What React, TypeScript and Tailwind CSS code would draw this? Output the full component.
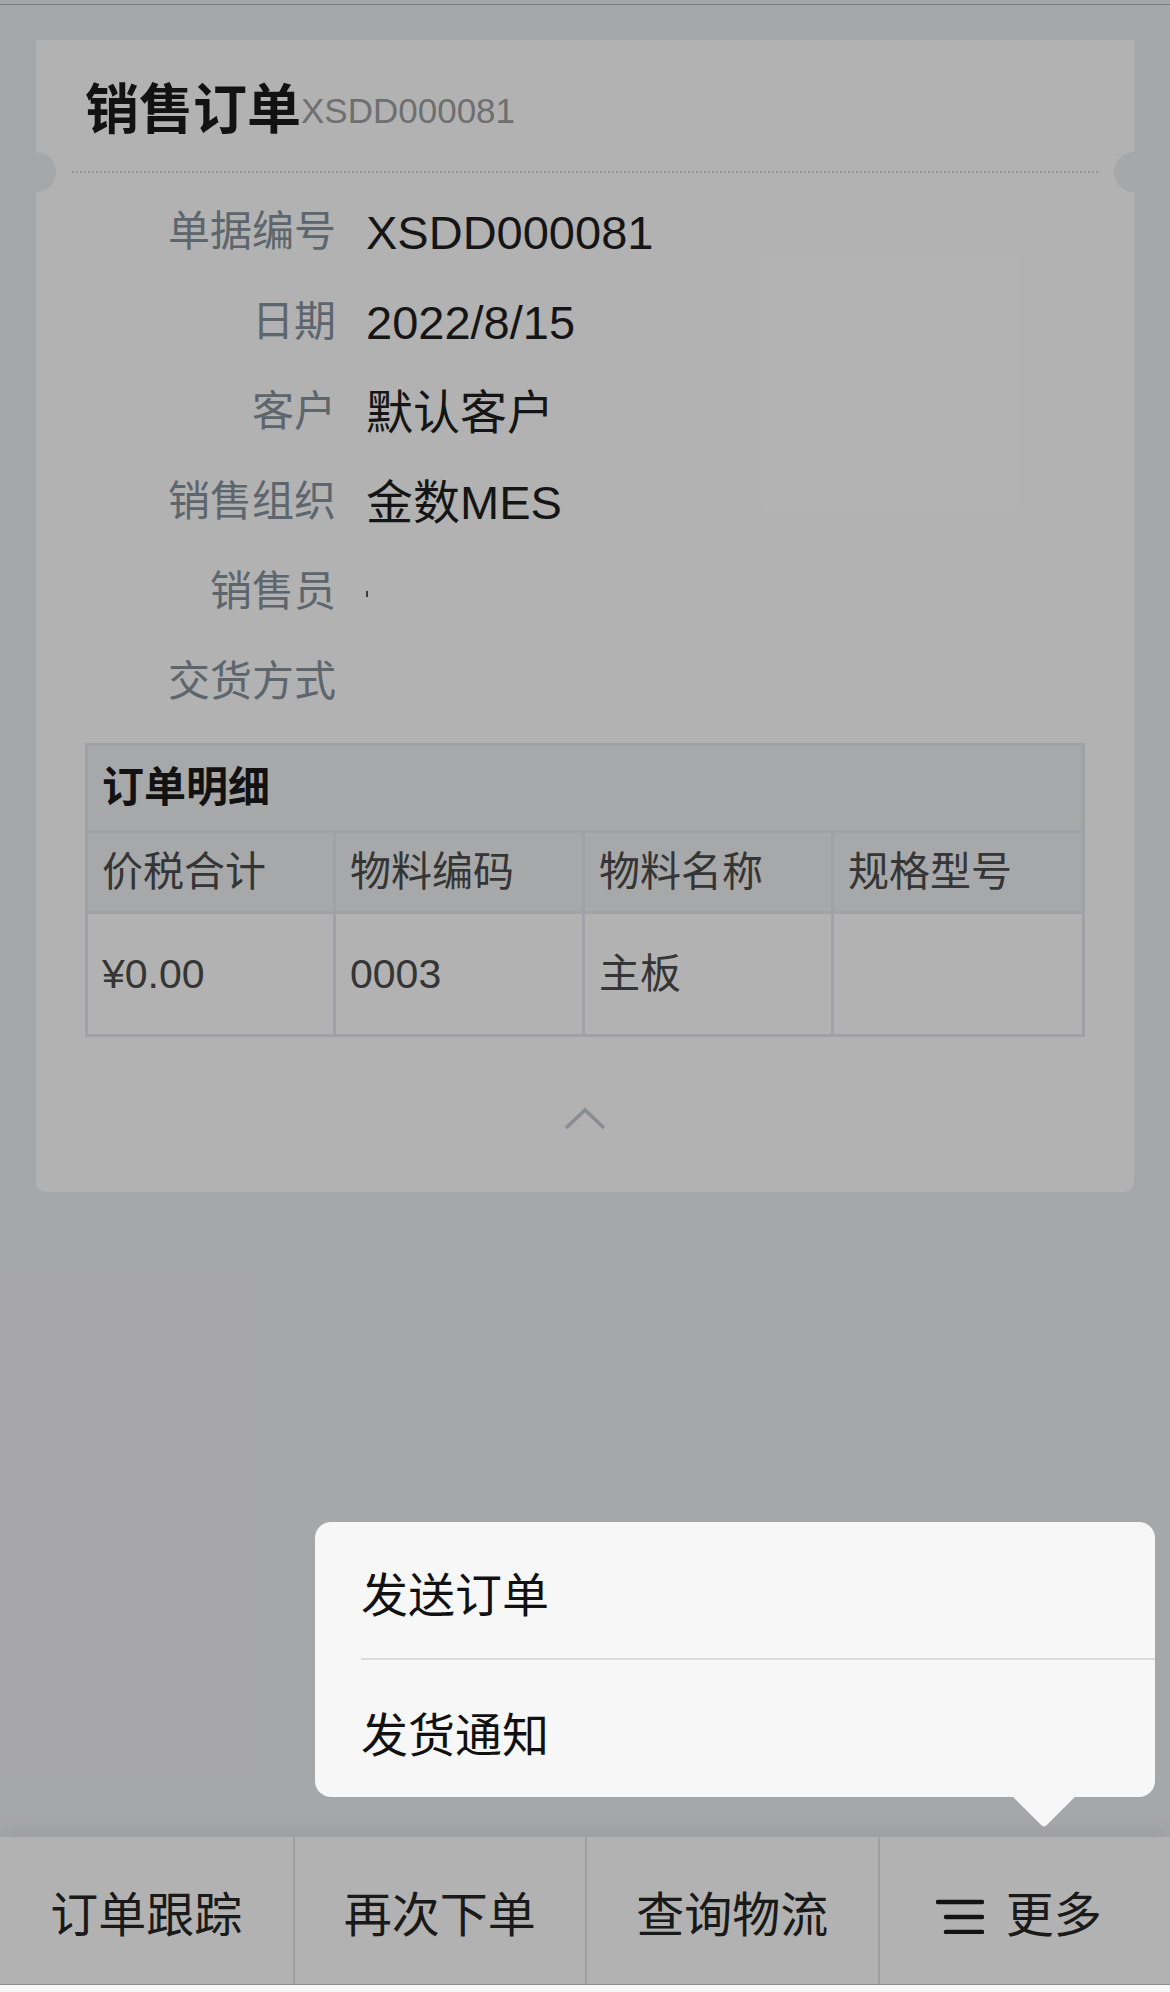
const rows: { label: string; value: string }[] = [
  { label: '单据编号', value: 'XSDD000081' },
  { label: '日期', value: '2022/8/15' },
  { label: '客户', value: '默认客户' },
  { label: '销售组织', value: '金数MES' },
  { label: '销售员', value: '' },
  { label: '交货方式', value: '' },
];

const columns = ['价税合计', '物料编码', '物料名称', '规格型号'];
const lineItem = ['¥0.00', '0003', '主板', ''];
const actions = ['订单跟踪', '再次下单', '查询物流'];

function MenuIcon() {
  return (
    <svg width="48" height="36" viewBox="0 0 48 36" fill="none">
      <path d="M2 4h44M10 19h36M10 34h36" stroke="#1c1c1c" strokeWidth="4.5" strokeLinecap="round" />
    </svg>
  );
}

export default function App() {
  return (
    <div className="w-[1170px] h-[1992px] bg-[#f8f8f8] font-['Liberation_Sans','Noto_Sans_CJK_SC',sans-serif]">
      <div className="relative h-[1985px] bg-[#eeeff1] flex flex-col overflow-hidden">
        {/* status strip */}
        <div className="h-[4px]" />
        <div className="h-px bg-[#afafaf]" />

        <main className="flex-1 pt-[35px] px-[36px]">
          <div className="relative bg-white rounded-b-[10px]">
            {/* notches */}
            <div className="absolute left-[-20px] top-[112px] w-[40px] h-[40px] rounded-full bg-[#eeeff1]" />
            <div className="absolute right-[-20px] top-[112px] w-[40px] h-[40px] rounded-full bg-[#eeeff1]" />

            <div className="h-[131px] pl-[49px] pt-[41px]">
              <div className="h-[58px] flex items-center">
                <span className="text-[54px] leading-[58px] font-bold text-[#1a1a1a]">销售订单</span>
                <span className="text-[35px] leading-none text-[#9f9f9f]">XSDD000081</span>
              </div>
            </div>
            <div className="mx-[36px] border-t-2 border-dotted border-[#d6d6d6]" />

            <div className="pt-[14px]">
              {rows.map((r) => (
                <div key={r.label} className="h-[90px] flex items-center">
                  <div className="w-[300px] text-right text-[42px] leading-none text-[#86919c]">{r.label}</div>
                  <div className="ml-[30px] text-[47px] leading-none text-[#1f1f1f]">
                    {r.label === '销售员' ? <span className="block w-[2px] h-[6px] mt-[4px] bg-[#555555]" /> : r.value}
                  </div>
                </div>
              ))}
            </div>

            {/* order detail table */}
            <div className="mt-[16px] mx-[49px] border-[3px] border-[#e5e9ed]">
              <div className="h-[84px] bg-[#f0f1f3] flex items-center pl-[14px] text-[42px] leading-none font-bold text-[#1a1a1a]">
                订单明细
              </div>
              <div className="grid grid-cols-[245px_249px_249px_1fr] bg-[#f0f1f3] border-t-[3px] border-[#e5e9ed]">
                {columns.map((c, i) => (
                  <div
                    key={c}
                    className={`h-[78px] flex items-center pl-[14px] text-[41px] leading-none text-[#4d4d4d] ${i > 0 ? 'border-l-[3px] border-[#e5e9ed]' : ''}`}
                  >
                    {c}
                  </div>
                ))}
              </div>
              <div className="grid grid-cols-[245px_249px_249px_1fr] border-t-[3px] border-[#e5e9ed]">
                {lineItem.map((v, i) => (
                  <div
                    key={i}
                    className={`h-[120px] flex items-center pl-[14px] text-[41px] leading-none text-[#4d4d4d] ${i > 0 ? 'border-l-[3px] border-[#e5e9ed]' : ''}`}
                  >
                    {v}
                  </div>
                ))}
              </div>
            </div>

            <div className="h-[155px] pt-[70px] flex justify-center">
              <svg width="42" height="24" viewBox="0 0 42 24" fill="none">
                <path d="M2 21L21 3l19 18" stroke="#c5c9d0" strokeWidth="3.5" />
              </svg>
            </div>
          </div>
        </main>

        {/* bottom actions */}
        <nav className="h-[148px] grid grid-cols-4 bg-white border-b border-[#cccccc] shadow-[0_-6px_20px_rgba(0,0,0,0.06)]">
          {actions.map((a, i) => (
            <div
              key={a}
              className={`flex items-center justify-center pt-[10px] text-[48px] leading-none text-[#262626] ${i > 0 ? 'border-l-2 border-[#e4e4e4]' : ''}`}
            >
              {a}
            </div>
          ))}
          <div className="flex items-center justify-center gap-[22px] pt-[10px] pr-[12px] border-l-2 border-[#e4e4e4] text-[48px] leading-none text-[#262626]">
            <MenuIcon />
            <span>更多</span>
          </div>
        </nav>

        {/* mask */}
        <div className="absolute inset-0 bg-black/30" />

        {/* more menu */}
        <div className="absolute left-[315px] top-[1522px] w-[840px] h-[275px] rounded-[16px] bg-[#f7f7f7]">
          <div className="absolute left-[705px] top-[248px] w-[48px] h-[48px] rotate-45 rounded-[4px] bg-[#f7f7f7]" />
          <div className="relative h-[136px] flex items-center pl-[46px] pt-[10px] text-[47px] leading-none text-[#111111]">发送订单</div>
          <div className="relative ml-[46px] h-[2px] bg-[#dcdcdc]" />
          <div className="relative h-[137px] flex items-center pl-[46px] pt-[14px] text-[47px] leading-none text-[#111111]">发货通知</div>
        </div>
      </div>
    </div>
  );
}
